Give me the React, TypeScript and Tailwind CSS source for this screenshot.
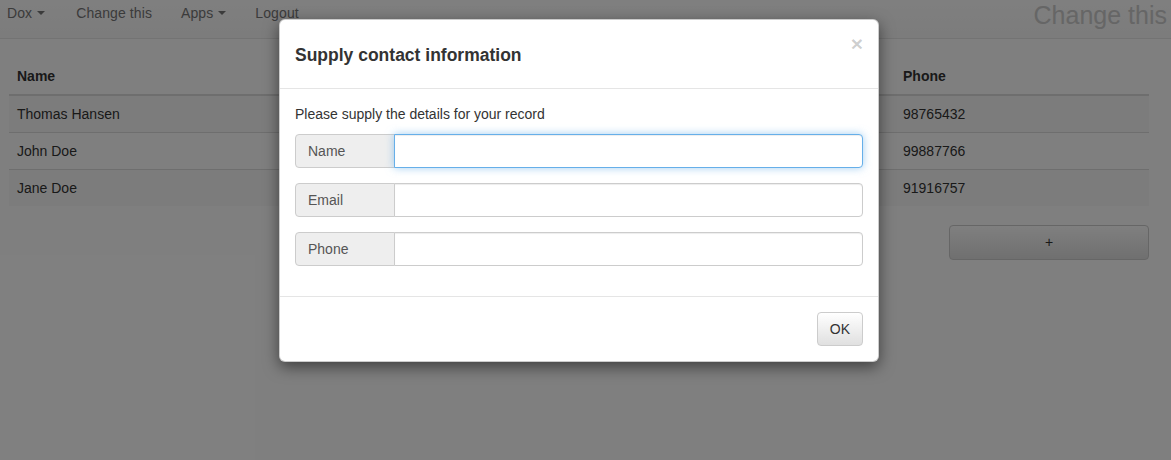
import React from 'react';

const font = { fontFamily: '"Liberation Sans", Arial, sans-serif' };

const rows = [
  { name: 'Thomas Hansen', email: 'thomas@gaiasoul.com', phone: '98765432' },
  { name: 'John Doe', email: 'john@doe.com', phone: '99887766' },
  { name: 'Jane Doe', email: 'jane@doe.com', phone: '91916757' },
];

const Caret = () => (
  <span className="ml-[5px] inline-block h-0 w-0 border-x-[4px] border-t-[4px] border-x-transparent border-t-[#777] align-middle" />
);

const Field = ({ label, focused }: { label: string; focused?: boolean }) => (
  <div className="flex h-[34px]">
    <span className="flex w-[100px] items-center rounded-l-[4px] border border-[#ccc] bg-[#eee] px-[12px] text-[14px] text-[#555]">
      {label}
    </span>
    {focused ? (
      <input
        className="-ml-px flex-1 rounded-r-[4px] border border-[#66afe9] bg-white px-[12px] text-[14px] outline-none shadow-[inset_0_1px_1px_rgba(0,0,0,0.075),0_0_8px_rgba(102,175,233,0.6)]"
        defaultValue=""
      />
    ) : (
      <input
        className="-ml-px flex-1 rounded-r-[4px] border border-[#ccc] bg-white px-[12px] text-[14px] outline-none shadow-[inset_0_1px_1px_rgba(0,0,0,0.075)]"
        defaultValue=""
      />
    )}
  </div>
);

export default function App() {
  return (
    <div className="relative h-[460px] w-[1171px] overflow-hidden bg-white text-[14px] text-[#333]" style={font}>
      {/* Navbar */}
      <div className="flex h-[39px] items-center justify-between border-b border-[#e7e7e7] bg-gradient-to-b from-white to-[#f8f8f8] pb-[12px] pl-[7px] pr-[4px]">
        <div className="flex text-[14px] tracking-[0.1px] text-[#777]">
          <span className="flex items-center">Dox<Caret /></span>
          <span className="ml-[31px]">Change this</span>
          <span className="ml-[29px] flex items-center">Apps<Caret /></span>
          <span className="ml-[29px]">Logout</span>
        </div>
        <div className="mt-[4px] text-[25px] leading-none text-[#ccc]">Change this</div>
      </div>

      {/* Table */}
      <div className="pl-[9px] pr-[22px] pt-[19px]">
        <div className="grid grid-cols-[440px_446px_1fr]">
          <div className="border-b-2 border-[#ddd] p-[8px] font-bold leading-[20px]">Name</div>
          <div className="border-b-2 border-[#ddd] p-[8px] font-bold leading-[20px]">Email</div>
          <div className="border-b-2 border-[#ddd] p-[8px] font-bold leading-[20px]">Phone</div>
          {rows.map((r, i) => (
            <React.Fragment key={r.name}>
              <div className={`p-[8px] leading-[20px] ${i > 0 ? 'border-t border-[#ddd]' : ''} ${i % 2 === 0 ? 'bg-[#f9f9f9]' : ''}`}>{r.name}</div>
              <div className={`p-[8px] leading-[20px] ${i > 0 ? 'border-t border-[#ddd]' : ''} ${i % 2 === 0 ? 'bg-[#f9f9f9]' : ''}`}>{r.email}</div>
              <div className={`p-[8px] leading-[20px] ${i > 0 ? 'border-t border-[#ddd]' : ''} ${i % 2 === 0 ? 'bg-[#f9f9f9]' : ''}`}>{r.phone}</div>
            </React.Fragment>
          ))}
        </div>
        <div className="mt-[19px] flex justify-end">
          <button className="h-[35px] w-[200px] rounded-[4px] border border-[#ccc] bg-gradient-to-b from-white to-[#e0e0e0] text-[14px] text-[#333]">
            +
          </button>
        </div>
      </div>

      {/* Backdrop */}
      <div className="absolute inset-0 bg-black/50" />

      {/* Modal */}
      <div className="absolute left-[279px] top-[19px] w-[600px] rounded-[6px] border border-black/20 bg-white shadow-[0_5px_15px_rgba(0,0,0,0.5)]">
        <div className="relative flex h-[69px] items-center border-b border-[#e5e5e5] px-[15px] pt-[1px]">
          <h4 className="text-[17.5px] font-bold leading-[26px] text-[#333]">Supply contact information</h4>
          <span className="absolute right-[15px] top-[13px] text-[21px] font-bold leading-none text-black/20">×</span>
        </div>
        <div className="p-[15px]">
          <p className="mb-[10px] leading-[20px]">Please supply the details for your record</p>
          <div className="flex flex-col gap-[15px]">
            <Field label="Name" focused />
            <Field label="Email" />
            <Field label="Phone" />
          </div>
          <div className="h-[15px]" />
        </div>
        <div className="flex justify-end border-t border-[#e5e5e5] p-[15px]">
          <button className="h-[34px] rounded-[4px] border border-[#ccc] bg-gradient-to-b from-white to-[#e0e0e0] px-[12px] text-[14px] text-[#333]">
            OK
          </button>
        </div>
      </div>
    </div>
  );
}
